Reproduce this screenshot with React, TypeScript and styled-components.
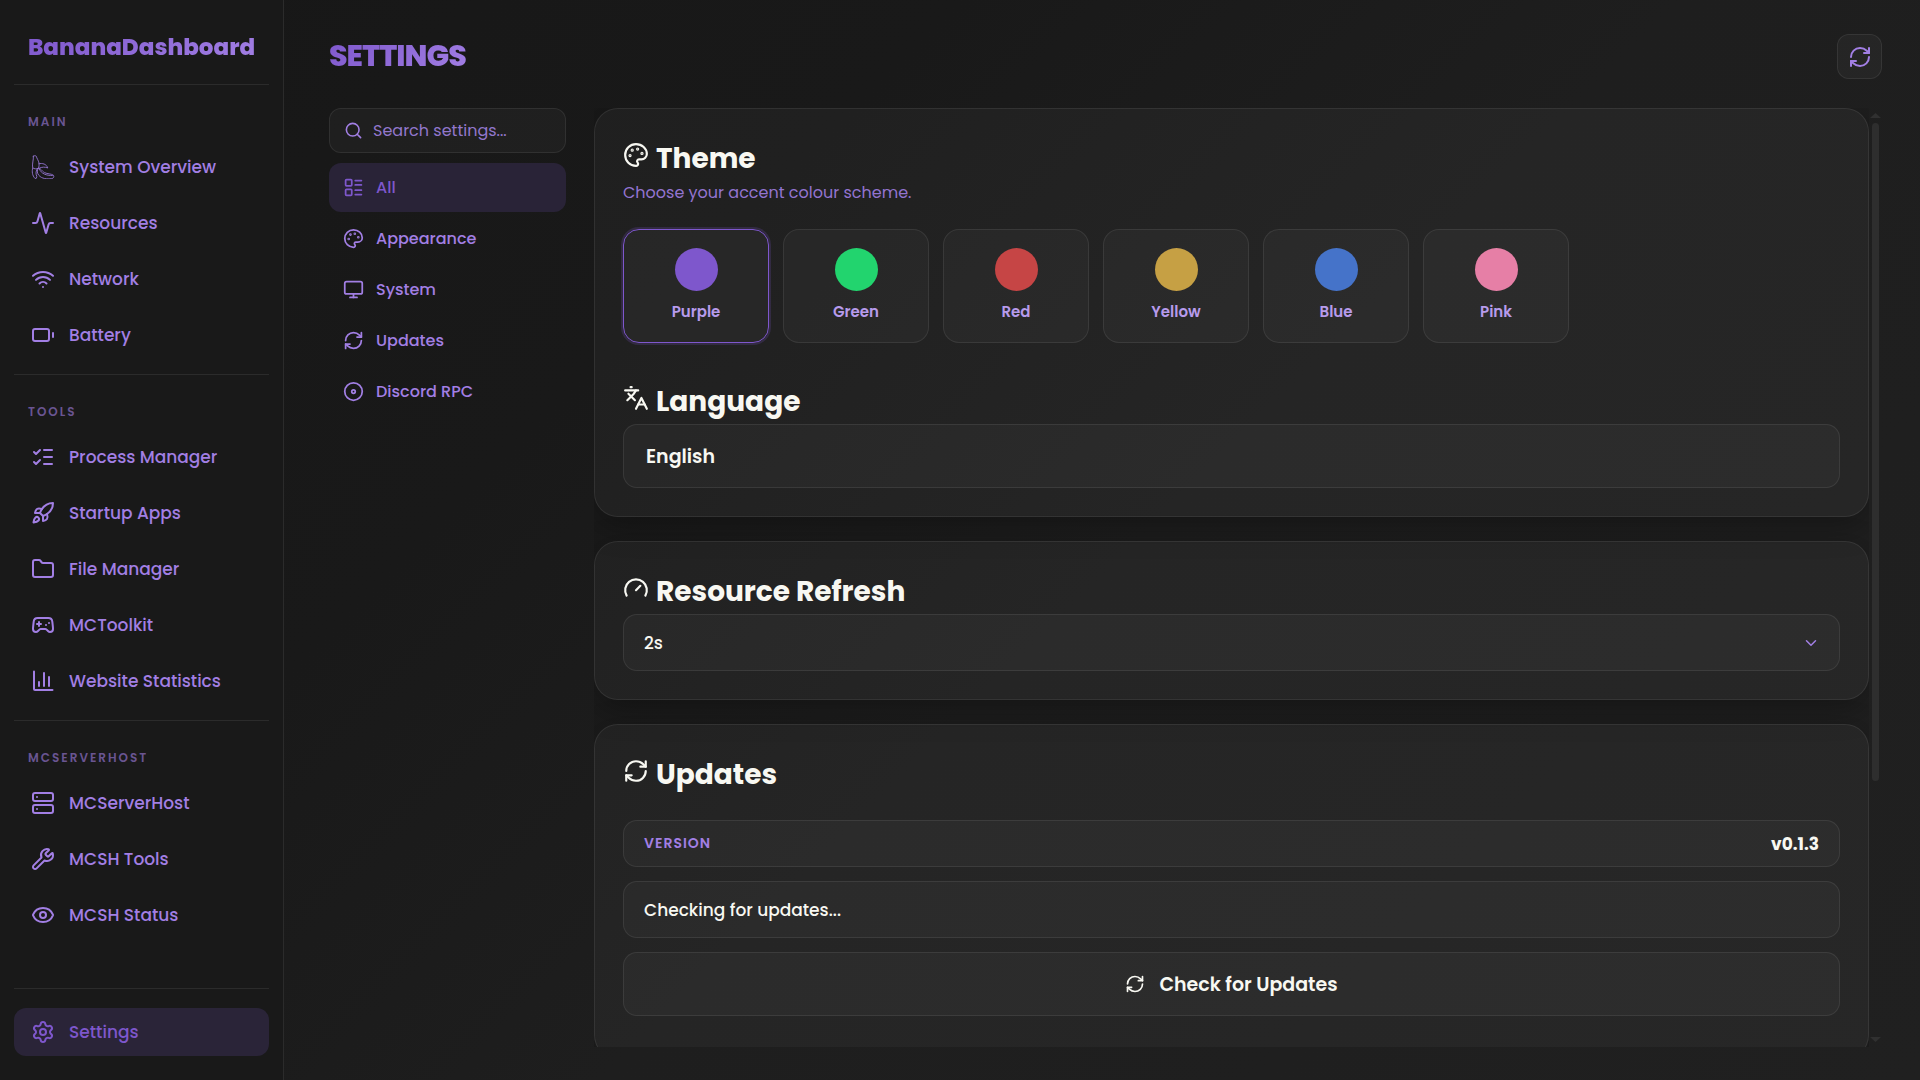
import React from "react";
import styled, { createGlobalStyle, css } from "styled-components";
import {
  Activity,
  Wifi,
  ListChecks,
  Rocket,
  Folder,
  Gamepad2,
  Server,
  Wrench,
  Eye,
  Settings as SettingsIcon,
  Search,
  LayoutList,
  Palette,
  Monitor,
  RefreshCw,
  Disc,
  Languages,
  Gauge,
  ChevronDown,
} from "lucide-react";

const color = {
  sidebar: "#191919",
  accent: "#7e57cc",
  accentSoft: "#a27fe4",
  accentPale: "#b79bec",
  text: "#f8f8f2",
  line: "rgba(255, 255, 255, 0.08)",
};

const GlobalStyle = createGlobalStyle`
  *, *::before, *::after { box-sizing: border-box; }
  body {
    margin: 0;
    background: #191919;
    color: ${color.text};
    font-family: Poppins, Inter, "Noto Sans", sans-serif;
    font-size: 16px;
  }
  button, input, select { font: inherit; color: inherit; margin: 0; }
`;

const Shell = styled.div`
  display: grid;
  grid-template-columns: 284px minmax(0, 1fr);
  height: 100vh;
  min-height: 640px;
  background: linear-gradient(135deg, #171717 0%, #191919 32%, #1e1e1e 56%, #202020 100%);
`;

/* ---------- Sidebar ---------- */

const Sidebar = styled.aside`
  display: flex;
  flex-direction: column;
  padding: 0 14px 24px;
  background: ${color.sidebar};
  border-right: 1px solid ${color.line};
  overflow: hidden;
`;

const gradientText = css`
  background: linear-gradient(135deg, ${color.accent}, ${color.accentSoft});
  background-clip: text;
  -webkit-background-clip: text;
  color: transparent;
`;

const Brand = styled.div`
  display: flex;
  align-items: center;
  justify-content: center;
  height: 84px;
  padding-top: 10px;
  font-size: 23px;
  font-weight: 800;
  line-height: 40px;

  span { ${gradientText} }
`;

const NavGroup = styled.section`
  display: flex;
  flex-direction: column;
  gap: 8px;
  padding-bottom: 15px;
  border-top: 1px solid ${color.line};
`;

const GroupLabel = styled.h2`
  margin: 0;
  padding: 27px 14px 3px;
  font-size: 12px;
  line-height: 20px;
  font-weight: 600;
  letter-spacing: 2px;
  color: rgba(162, 127, 228, 0.6);
`;

const SidebarFoot = styled.div`
  margin-top: auto;
  padding-top: 19px;
  border-top: 1px solid ${color.line};
`;

const NavLink = styled.a<{ $active?: boolean }>`
  display: flex;
  align-items: center;
  gap: 14px;
  height: 48px;
  padding: 0 17px;
  border-radius: 12px;
  font-size: 17px;
  font-weight: 500;
  text-decoration: none;
  color: ${(p) => (p.$active ? color.accent : color.accentSoft)};
  background: ${(p) => (p.$active ? "#2a2438" : "transparent")};

  svg { flex: none; }
`;

/* ---------- Main area ---------- */

const Main = styled.main`
  display: flex;
  flex-direction: column;
  min-width: 0;
  min-height: 0;
  padding: 34px 38px 33px 45px;
`;

const Header = styled.header`
  display: flex;
  align-items: flex-start;
  justify-content: space-between;
  margin-bottom: 29px;
`;

const PageTitle = styled.h1`
  margin: 0;
  font-size: 30px;
  line-height: 43px;
  font-weight: 800;
  letter-spacing: -1px;
  ${gradientText}
`;

const IconButton = styled.button`
  display: grid;
  place-items: center;
  width: 45px;
  height: 45px;
  padding: 0;
  border: 1px solid ${color.line};
  border-radius: 12px;
  background: rgba(255, 255, 255, 0.03);
  color: ${color.accentSoft};
`;

const Columns = styled.div`
  display: grid;
  grid-template-columns: 237px minmax(0, 1fr);
  gap: 28px;
  flex: 1;
  min-height: 0;
`;

const SubNav = styled.nav`
  display: flex;
  flex-direction: column;
  gap: 2px;
`;

const SearchBox = styled.label`
  display: flex;
  align-items: center;
  gap: 10px;
  height: 45px;
  margin-bottom: 8px;
  padding: 0 14px;
  border: 1px solid ${color.line};
  border-radius: 12px;
  background: rgba(255, 255, 255, 0.03);
  color: ${color.accentSoft};

  svg { flex: none; }

  input {
    flex: 1;
    min-width: 0;
    padding: 0;
    border: 0;
    outline: 0;
    background: none;
  }

  input::placeholder { color: #9277cc; opacity: 1; }
`;

const Tab = styled.button<{ $active?: boolean }>`
  display: flex;
  align-items: center;
  gap: 12px;
  height: 49px;
  padding: 0 14px;
  border: 0;
  border-radius: 12px;
  font-size: 16px;
  font-weight: 500;
  text-align: left;
  color: ${(p) => (p.$active ? color.accent : color.accentSoft)};
  background: ${(p) => (p.$active ? "#292337" : "transparent")};
`;

const ScrollPane = styled.div`
  display: grid;
  grid-template-columns: minmax(0, 1fr) 13px;
  min-height: 0;
`;

const CardList = styled.div`
  display: flex;
  flex-direction: column;
  gap: 24px;
  min-height: 0;
  overflow-y: auto;
  scrollbar-width: none;
`;

const Scrollbar = styled.div`
  display: flex;
  flex-direction: column;
  align-items: center;
  padding: 5px 0;
`;

const ScrollTrack = styled.div`
  flex: 1;
  width: 7px;
  margin: 5px 0;
`;

const ScrollThumb = styled.div`
  height: 72.4%;
  border-radius: 4px;
  background: #2e2e2e;
`;

const ScrollArrow = styled.div<{ $down?: boolean }>`
  width: 11px;
  height: 5px;
  background: #303030;
  clip-path: ${(p) => (p.$down ? "polygon(0 0, 100% 0, 50% 100%)" : "polygon(50% 0, 100% 100%, 0 100%)")};
`;

const Card = styled.section`
  flex: none;
  padding: 28px;
  border: 1px solid ${color.line};
  border-radius: 24px;
  background: rgba(255, 255, 255, 0.03);
  box-shadow: 0 8px 32px rgba(0, 0, 0, 0.3);
`;

const CardTitle = styled.h2`
  display: flex;
  align-items: flex-start;
  gap: 7px;
  margin: 0;
  font-size: 28px;
  line-height: 44px;
  font-weight: 700;

  svg { flex: none; margin-top: 5px; }
`;

const Hint = styled.p`
  margin: 0 0 24px;
  font-size: 16px;
  line-height: 24px;
  color: #9374d0;
`;

const Swatches = styled.div`
  display: flex;
  flex-wrap: wrap;
  gap: 14px;
  margin-bottom: 37px;
`;

const Swatch = styled.button<{ $active?: boolean }>`
  display: flex;
  flex-direction: column;
  align-items: center;
  gap: 10px;
  width: 146px;
  height: 114px;
  padding: 18px 0;
  border: 1px solid ${(p) => (p.$active ? color.accent : color.line)};
  border-radius: 16px;
  background: rgba(255, 255, 255, 0.03);
  box-shadow: ${(p) => (p.$active ? "0 0 0 2px rgba(126, 87, 204, 0.2)" : "none")};
  color: ${color.accentPale};
  font-size: 15px;
  line-height: 22px;
  font-weight: 600;
`;

const Dot = styled.span<{ $fill: string }>`
  width: 43px;
  height: 43px;
  border-radius: 50%;
  background: ${(p) => p.$fill};
`;

const field = css`
  border: 1px solid ${color.line};
  border-radius: 14px;
  background: rgba(255, 255, 255, 0.03);
`;

const SelectField = styled.div`
  display: grid;
  align-items: center;

  & > * { grid-area: 1 / 1; }

  svg {
    justify-self: end;
    margin-right: 20px;
    color: ${color.accentSoft};
    pointer-events: none;
  }
`;

const Select = styled.select<{ $large?: boolean }>`
  ${field}
  width: 100%;
  height: ${(p) => (p.$large ? "64px" : "57px")};
  padding: 0 ${(p) => (p.$large ? "22px" : "20px")};
  appearance: none;
  outline: 0;
  font-size: ${(p) => (p.$large ? "19px" : "17px")};
  font-weight: ${(p) => (p.$large ? 600 : 500)};
`;

const UpdateStack = styled.div`
  display: flex;
  flex-direction: column;
  gap: 14px;
  margin-top: 23px;
`;

const VersionRow = styled.div`
  ${field}
  display: flex;
  align-items: center;
  justify-content: space-between;
  height: 47px;
  padding: 0 20px;
`;

const VersionLabel = styled.span`
  font-size: 14px;
  font-weight: 600;
  letter-spacing: 1px;
  color: ${color.accentSoft};
`;

const VersionValue = styled.strong`
  font-size: 17px;
  font-weight: 700;
`;

const StatusRow = styled.div`
  ${field}
  display: flex;
  align-items: center;
  height: 57px;
  padding: 0 20px;
  font-size: 17px;
  font-weight: 500;
`;

const ActionButton = styled.button`
  ${field}
  display: flex;
  align-items: center;
  justify-content: center;
  gap: 14px;
  height: 64px;
  font-size: 19px;
  font-weight: 600;
`;

const BananaIcon = () => (
  <svg width="24" height="24" viewBox="0 0 24 24" fill="none" stroke="currentColor" strokeWidth="0.9" strokeLinecap="round" strokeLinejoin="round" opacity="0.9">
    <path d="M2.400 1.200C3 .5 4.700.5 5.300 1.300c.4 2 2.200 4.200 2.700 6.700.3 2 0 3.800-.6 5.200C5.500 14.200 3 14 1.700 12.800.9 9 2.700 5 2.400 1.200Z" />
    <path d="M7.800 8.800c3.700-1 7.600.2 9 4.200-2.700-1.200-5.700-1.200-8.600.2" />
    <path d="M1.700 13c-.9 3.300-.6 7.500 2.400 10.500l1.300-.3.400-1.700c-1.300-3-1-5.800.8-8.200" />
    <path d="M7.200 13.400c2.400-.8 3.600 2.800 6.300 4.200 3 1.500 6.800 1 9 2.700.8 1.500 0 3-1.700 3.300-5 .6-10 .2-13-3.300-1.700-2.200-2-4.500-.6-6.900Z" />
    <path d="M8.400 14.200c1.800 4.300 6.800 6.600 12.900 6.300" />
  </svg>
);

const ChartIcon = () => (
  <svg width="24" height="24" viewBox="0 0 24 24" fill="none" stroke="currentColor" strokeWidth="2" strokeLinecap="round" strokeLinejoin="round">
    <path d="M3 2.500v17.500a1 1 0 0 0 1 1h17.500M8 17v-4M13 17V4M18 17V8" />
  </svg>
);

const BatteryIcon = () => (
  <svg width="24" height="24" viewBox="0 0 24 24" fill="none" stroke="currentColor" strokeWidth="2" strokeLinecap="round" strokeLinejoin="round">
    <rect x="2" y="6" width="16" height="12" rx="2" />
    <path d="M22 10v4" />
  </svg>
);

type Item = { label: string; icon: React.ReactNode };

const groups: { title: string; items: Item[] }[] = [
  {
    title: "MAIN",
    items: [
      { label: "System Overview", icon: <BananaIcon /> },
      { label: "Resources", icon: <Activity /> },
      { label: "Network", icon: <Wifi /> },
      { label: "Battery", icon: <BatteryIcon /> },
    ],
  },
  {
    title: "TOOLS",
    items: [
      { label: "Process Manager", icon: <ListChecks /> },
      { label: "Startup Apps", icon: <Rocket /> },
      { label: "File Manager", icon: <Folder /> },
      { label: "MCToolkit", icon: <Gamepad2 /> },
      { label: "Website Statistics", icon: <ChartIcon /> },
    ],
  },
  {
    title: "MCSERVERHOST",
    items: [
      { label: "MCServerHost", icon: <Server /> },
      { label: "MCSH Tools", icon: <Wrench /> },
      { label: "MCSH Status", icon: <Eye /> },
    ],
  },
];

const tabs: Item[] = [
  { label: "All", icon: <LayoutList size={21} /> },
  { label: "Appearance", icon: <Palette size={21} /> },
  { label: "System", icon: <Monitor size={21} /> },
  { label: "Updates", icon: <RefreshCw size={21} /> },
  { label: "Discord RPC", icon: <Disc size={21} /> },
];

const themes = [
  { name: "Purple", fill: "#7e57cc" },
  { name: "Green", fill: "#22d46e" },
  { name: "Red", fill: "#c64545" },
  { name: "Yellow", fill: "#c6a044" },
  { name: "Blue", fill: "#4573c9" },
  { name: "Pink", fill: "#e67fa6" },
];

export default function App() {
  const [tab, setTab] = React.useState("All");
  const [theme, setTheme] = React.useState("Purple");

  return (
    <>
      <GlobalStyle />
      <Shell>
        <Sidebar>
          <Brand><span>BananaDashboard</span></Brand>
          {groups.map((group) => (
            <NavGroup key={group.title}>
              <GroupLabel>{group.title}</GroupLabel>
              {group.items.map((item) => (
                <NavLink key={item.label} href="#">
                  {item.icon}
                  {item.label}
                </NavLink>
              ))}
            </NavGroup>
          ))}
          <SidebarFoot>
            <NavLink href="#" $active aria-current="page">
              <SettingsIcon />
              Settings
            </NavLink>
          </SidebarFoot>
        </Sidebar>

        <Main>
          <Header>
            <PageTitle>SETTINGS</PageTitle>
            <IconButton aria-label="Refresh">
              <RefreshCw size={24} />
            </IconButton>
          </Header>

          <Columns>
            <SubNav>
              <SearchBox>
                <Search size={19} />
                <input type="text" placeholder="Search settings..." aria-label="Search settings" />
              </SearchBox>
              {tabs.map((item) => (
                <Tab key={item.label} $active={tab === item.label} onClick={() => setTab(item.label)}>
                  {item.icon}
                  {item.label}
                </Tab>
              ))}
            </SubNav>

            <ScrollPane>
              <CardList>
                <Card>
                  <CardTitle><Palette size={26} />Theme</CardTitle>
                  <Hint>Choose your accent colour scheme.</Hint>
                  <Swatches>
                    {themes.map((t) => (
                      <Swatch key={t.name} $active={theme === t.name} onClick={() => setTheme(t.name)}>
                        <Dot $fill={t.fill} />
                        {t.name}
                      </Swatch>
                    ))}
                  </Swatches>
                  <CardTitle><Languages size={26} />Language</CardTitle>
                  <SelectField>
                    <Select $large aria-label="Language">
                      <option>English</option>
                    </Select>
                  </SelectField>
                </Card>

                <Card>
                  <CardTitle><Gauge size={26} />Resource Refresh</CardTitle>
                  <SelectField>
                    <Select aria-label="Resource refresh interval">
                      <option>2s</option>
                    </Select>
                    <ChevronDown size={18} />
                  </SelectField>
                </Card>

                <Card>
                  <CardTitle><RefreshCw size={26} />Updates</CardTitle>
                  <UpdateStack>
                    <VersionRow>
                      <VersionLabel>VERSION</VersionLabel>
                      <VersionValue>v0.1.3</VersionValue>
                    </VersionRow>
                    <StatusRow>Checking for updates...</StatusRow>
                    <ActionButton>
                      <RefreshCw size={20} />
                      Check for Updates
                    </ActionButton>
                    <div role="status" />
                  </UpdateStack>
                </Card>
              </CardList>
              <Scrollbar aria-hidden="true">
                <ScrollArrow />
                <ScrollTrack><ScrollThumb /></ScrollTrack>
                <ScrollArrow $down />
              </Scrollbar>
            </ScrollPane>
          </Columns>
        </Main>
      </Shell>
    </>
  );
}
